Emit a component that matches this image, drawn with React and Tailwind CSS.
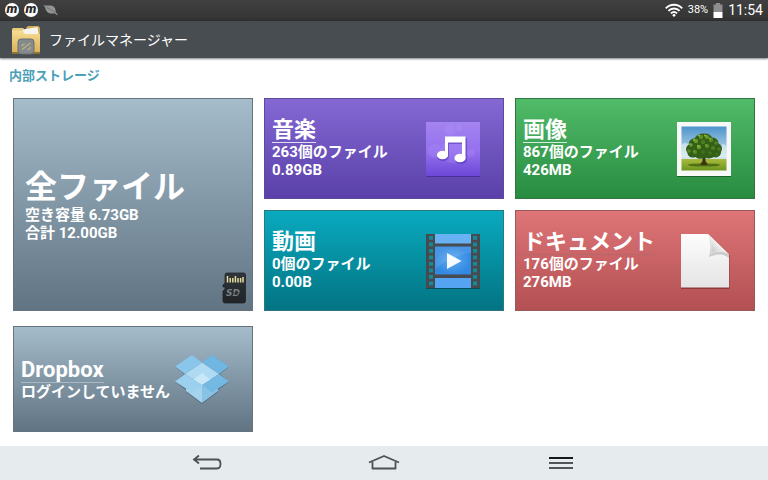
import clsx from "clsx";

// ----------------------------------
// STATUS BAR ICONS
// ----------------------------------
function AppBadge() {
  return (
    <span className="flex h-3.5 w-3.5 items-center justify-center rounded-full bg-white">
      <span className="text-[13px] leading-[10px] pb-0.5 font-black italic text-[#2a2a2a]">
        m
      </span>
    </span>
  );
}

function LeafIcon() {
  return (
    <svg width="16" height="14" viewBox="0 0 16 14" aria-hidden="true">
      <path
        d="M0.5 2C4 3.4 6.5 1.800 9.500 3C12.500 4.400 12.600 7.200 12.700 9L15.200 12.200C13.600 12 12.600 11.200 11.800 10.200C8.600 11 5.200 10.600 3.600 8.200C2.300 6.200 2.200 4 0.5 2Z"
        fill="#949494"
      />
      <path
        d="M3.500 4.600C6.800 5.600 9.600 7.400 11.800 9.600"
        stroke="#636363"
        strokeWidth="0.7"
        fill="none"
      />
    </svg>
  );
}

function WifiIcon() {
  return (
    <svg width="18" height="14" viewBox="0 0 18 14" aria-hidden="true">
      <g fill="none" stroke="#fff" strokeWidth="1.9">
        <path d="M0.8 5.3C5.4 0.5 12.6 0.5 17.2 5.3" />
        <path d="M3.4 7.9C6.6 4.7 11.4 4.7 14.6 7.9" />
        <path d="M5.9 10.4C7.7 8.7 10.3 8.7 12.1 10.4" />
      </g>
      <circle cx="9" cy="12.3" r="1.4" fill="#fff" />
    </svg>
  );
}

function BatteryIcon() {
  return (
    <svg width="10" height="15" viewBox="0 0 10 15" aria-hidden="true">
      <path d="M3 0H7V1.5H9.5V9H0.5V1.5H3Z" fill="#8d8d8d" />
      <rect x="0.5" y="9" width="9" height="6" fill="#fff" />
    </svg>
  );
}

// ----------------------------------
// TITLE BAR ICON
// ----------------------------------
function FolderIcon() {
  return (
    <svg width="30" height="30" viewBox="0 0 30 30" aria-hidden="true">
      <defs>
        <linearGradient id="folder" x1="0" y1="0" x2="0" y2="1">
          <stop offset="0" stopColor="#f7dd94" />
          <stop offset="1" stopColor="#d9b056" />
        </linearGradient>
      </defs>
      <path d="M15 3L17 1H27.5L29 3V26H15Z" fill="#d3aa55" />
      <path d="M1 4L2 3H12L14 5V9H1Z" fill="#e9c87c" />
      <path d="M12 4.5L26.5 2L28 12H12Z" fill="#f4f5f0" />
      <path d="M1 5.5H11L14 9H29V28H1Z" fill="url(#folder)" />
      <path d="M1 27H29V29H1Z" fill="#8d7238" />
      <rect
        x="7"
        y="14"
        width="16"
        height="15"
        rx="3"
        fill="#858b8c"
        stroke="#686e70"
      />
      <path
        d="M11 24.500L19.500 18M16.500 25L20 22.300M10.500 21L13.500 18.800"
        stroke="#bdb084"
        strokeWidth="1.4"
      />
    </svg>
  );
}

// ----------------------------------
// TILE ICONS
// ----------------------------------
function SdCardIcon() {
  return (
    <svg width="24" height="32" viewBox="0 0 24 32" aria-hidden="true">
      <defs>
        <linearGradient id="sd" x1="0" y1="0" x2="0" y2="1">
          <stop offset="0" stopColor="#30363b" />
          <stop offset="1" stopColor="#202427" />
        </linearGradient>
      </defs>
      <path
        d="M5 1H21.5Q23.5 1 23.5 3V29Q23.5 31 21.5 31H3Q1 31 1 29V19L3 17V15H1V13L3 11V3Q3 1 5 1Z"
        fill="url(#sd)"
        stroke="#1c2023"
        strokeWidth="0.7"
      />
      <path
        d="M5.500 4V10.500M8.200 6V10.500M10.800 6V10.500M13.400 4V10.500M16 6V10.500M18.600 6V10.500M21 5V10.500"
        stroke="#e3dc9c"
        strokeWidth="1.5"
      />
      <text
        x="4"
        y="24"
        fontFamily="'DejaVu Sans', sans-serif"
        fontSize="9"
        fontWeight="700"
        fontStyle="italic"
        fill="#7b8184"
      >
        SD
      </text>
      <path d="M10 20.800H21M10 22.200H19" stroke="#24292c" strokeWidth="0.6" />
    </svg>
  );
}

function MusicIcon() {
  return (
    <svg width="54" height="56" viewBox="0 0 54 56" aria-hidden="true">
      <defs>
        <linearGradient id="music" x1="0" y1="0" x2="0" y2="1">
          <stop offset="0" stopColor="#a384f0" />
          <stop offset="0.55" stopColor="#9470ee" />
          <stop offset="1" stopColor="#6c48d8" />
        </linearGradient>
      </defs>
      <rect y="2" width="54" height="54" fill="#3a2580" opacity="0.6" />
      <rect y="1" width="54" height="54" fill="url(#music)" />
      <g fill="#c0a4ff" opacity="0.18">
        <circle cx="9" cy="30" r="7" />
        <circle cx="24" cy="9" r="5" />
        <circle cx="45" cy="32" r="4" />
        <circle cx="33" cy="7" r="3" />
        <circle cx="27" cy="30" r="12" />
      </g>
      <g fill="#4a2fa8" opacity="0.5">
        <path d="M20 17H41V38H37V23H23V36H20Z" />
        <ellipse cx="17" cy="35.500" rx="6" ry="4.5" />
        <ellipse cx="35" cy="38.500" rx="6" ry="4.5" />
      </g>
      <g fill="#fff">
        <path d="M19 15.500H39.500V37H36V21.500H22V34H19Z" />
        <ellipse cx="16.500" cy="34" rx="5.600" ry="4.300" />
        <ellipse cx="34" cy="37" rx="5.600" ry="4.300" />
      </g>
    </svg>
  );
}

// leaf clusters of the tree crown: [cx, cy, r, colour]
const LEAVES = [
  [24, 16, 2.2, "#5f8f27"],
  [30, 16, 2, "#6c9c2c"],
  [19, 20, 2.2, "#6a9a2a"],
  [26, 21, 2.2, "#4c7d1f"],
  [34, 19, 2.2, "#5c8d26"],
  [39, 22, 1.8, "#55861f"],
  [14, 24, 1.8, "#6a9a2a"],
  [22, 26, 2.2, "#6c9c2c"],
  [30, 25, 2, "#5f8f27"],
  [36, 27, 2, "#4f8120"],
  [42, 28, 1.8, "#4c7d1f"],
  [12, 30, 1.8, "#568823"],
  [18, 31, 2, "#5a8b24"],
  [26, 31, 1.8, "#447319"],
  [33, 32, 1.8, "#447319"],
  [40, 33, 1.6, "#416f18"],
  [22, 14.5, 0.9, "#9cc552"],
  [28, 14.5, 0.9, "#9cc552"],
  [17, 19, 0.9, "#97c04c"],
  [33, 17.5, 0.9, "#8db845"],
  [21, 25, 0.9, "#97c04c"],
  [29, 24, 0.8, "#86b13f"],
  [13, 23, 0.8, "#8db845"],
  [17, 30, 0.8, "#7ba838"],
];

function PhotoIcon() {
  return (
    <svg width="54" height="56" viewBox="0 0 54 56" aria-hidden="true">
      <defs>
        <linearGradient id="sky" x1="0" y1="0" x2="0" y2="1">
          <stop offset="0" stopColor="#4d94cc" />
          <stop offset="1" stopColor="#d5e9ee" />
        </linearGradient>
        <linearGradient id="grass" x1="0" y1="0" x2="0" y2="1">
          <stop offset="0" stopColor="#a9bb3c" />
          <stop offset="1" stopColor="#6d961f" />
        </linearGradient>
      </defs>
      <rect y="2" width="54" height="54" fill="#134d22" opacity="0.7" />
      <rect y="1" width="54" height="54" fill="#f7f8f7" />
      <rect x="4.5" y="5.5" width="45" height="33" fill="url(#sky)" />
      <path
        d="M4.5 24Q8 20 12 24H44Q47 22 49.5 25V36H4.5Z"
        fill="#eaf3f2"
        opacity="0.6"
      />
      <rect x="4.5" y="38" width="45" height="11.5" fill="url(#grass)" />
      <ellipse cx="27" cy="44" rx="16" ry="1.6" fill="#4d7214" />
      <path d="M25.5 32H28.500L28.500 40L31 44H23L25.500 40Z" fill="#3f3212" />
      <path
        d="M27 12.500C31 12 34 14 35 16.500C39 16.500 41.500 19 41.500 22.500C45 24 46 28 44 31C44 35 40 37.500 36.500 36C33.500 38 30.500 37.500 27.500 36.500C24 38.500 20.500 38 18.500 36C14.500 37.500 10.500 35.500 10.500 32C8 29 9 25 12 23.500C11.500 20 14 17.500 17.500 17.500C19 14.500 22.500 12.500 27 12.500Z"
        fill="#345f17"
      />
      {LEAVES.map(([cx, cy, r, fill]) => (
        <circle key={`${cx}-${cy}`} cx={cx} cy={cy} r={r} fill={fill} />
      ))}
    </svg>
  );
}

const FILM_HOLES = [3, 9.5, 16, 22.5, 29, 35.5, 42, 48.5];

function VideoIcon() {
  return (
    <svg width="54" height="56" viewBox="0 0 54 56" aria-hidden="true">
      <defs>
        <radialGradient id="film">
          <stop offset="0" stopColor="#5cabf3" />
          <stop offset="1" stopColor="#3389e2" />
        </radialGradient>
      </defs>
      <rect y="2" width="54" height="54" fill="#083c44" opacity="0.7" />
      <rect y="1" width="54" height="54" fill="#474b4f" />
      <rect x="9" y="1" width="36" height="9.5" fill="#68b1f3" />
      <rect x="9" y="13.5" width="36" height="28" fill="url(#film)" />
      <rect x="9" y="45" width="36" height="10" fill="#55a4f1" />
      <path d="M9 13.5H45V20Q27 22 9 36Z" fill="#fff" opacity="0.1" />
      {FILM_HOLES.map((y) => (
        <g key={y} fill="#138b98">
          <rect x="3" y={y} width="4" height="3.8" />
          <rect x="47" y={y} width="4" height="3.8" />
        </g>
      ))}
      <path d="M21 20L35.5 28L21 36Z" fill="#f7fbff" />
    </svg>
  );
}

function DocumentIcon() {
  return (
    <svg width="54" height="56" viewBox="0 0 54 56" aria-hidden="true">
      <defs>
        <linearGradient id="paper" x1="0" y1="0" x2="0" y2="1">
          <stop offset="0" stopColor="#fdfdfd" />
          <stop offset="1" stopColor="#e4e4e4" />
        </linearGradient>
        <linearGradient id="fold" x1="1" y1="0" x2="0" y2="1">
          <stop offset="0.4" stopColor="#ffffff" />
          <stop offset="1" stopColor="#b4b4b4" />
        </linearGradient>
      </defs>
      <path d="M4 3H31L52.5 22V56H4Z" fill="#6b2326" opacity="0.55" />
      <path d="M4 1H31L52 21.500V54.500H4Z" fill="url(#paper)" />
      <path
        d="M31 1C35 8 35.500 15 33.500 21C41 17.500 47 18 52 21.500V25C46 20.500 40 20.500 32 24C34.500 15 34 8 31 1Z"
        fill="#7d7d7d"
        opacity="0.35"
      />
      <path
        d="M31 1C35 7 35.500 14 34 20C41 17 47 18 52 21.500Z"
        fill="url(#fold)"
      />
    </svg>
  );
}

function DropboxIcon() {
  return (
    <svg width="54" height="50" viewBox="0 0 54 50" aria-hidden="true">
      <path
        d="M17 2L27 9.500L38 2L54 13L45 20L54 28L43 36V38L27 50L11 38V36L0 28L9 20L0 13Z"
        fill="#34495a"
        opacity="0.5"
      />
      <path d="M11 21L27 31V49L11 37Z" fill="#a4d3ee" />
      <path d="M27 31L43 21V37L27 49Z" fill="#88c2e5" />
      <path d="M17 1L27 8.500L10 20L0 12.500Z" fill="#8ac5ea" />
      <path d="M37 1L54 12.500L44 20L27 8.500Z" fill="#6fb6e1" />
      <path d="M27 8.500L44 20L27 31L10 20Z" fill="#aedaf3" />
      <path d="M27 19L35.500 25.500L27 31L18.500 25.500Z" fill="#c8e8f8" />
      <path d="M10 20L27 31L17 38.500L0 27.500Z" fill="#9bd0ef" />
      <path d="M44 20L54 27.500L37 38.500L27 31Z" fill="#74b9e3" />
    </svg>
  );
}

// ----------------------------------
// NAVIGATION ICONS
// ----------------------------------
function BackIcon() {
  return (
    <svg width="30" height="18" viewBox="0 0 30 18" aria-hidden="true">
      <path
        d="M7 1.500L2 5.500L7 9.500M2 5.500H25Q28.500 5.500 28.500 10Q28.500 14.500 25 14.500H8"
        fill="none"
        stroke="#4b5154"
        strokeWidth="1.8"
      />
    </svg>
  );
}

function HomeIcon() {
  return (
    <svg width="32" height="18" viewBox="0 0 32 18" aria-hidden="true">
      <path
        d="M1 8.500L16 2L31 8.500M4.500 8V14.500H27.500V8"
        fill="none"
        stroke="#4b5154"
        strokeWidth="1.8"
        strokeLinejoin="round"
      />
    </svg>
  );
}

function MenuIcon() {
  return (
    <svg width="24" height="18" viewBox="0 0 24 18" aria-hidden="true">
      <path d="M0 4H24" stroke="#15191b" strokeWidth="2" />
      <path d="M0 9H24M0 14H24" stroke="#4f5558" strokeWidth="2" />
    </svg>
  );
}

const CATEGORIES = [
  {
    title: "音楽",
    lines: ["263個のファイル", "0.89GB"],
    icon: MusicIcon,
    color: "from-[#8468d4] to-[#5a40a8] border-[#5d4a9c]",
    underline: "border-white/80",
  },
  {
    title: "画像",
    lines: ["867個のファイル", "426MB"],
    icon: PhotoIcon,
    color: "from-[#50bb69] to-[#288c40] border-[#35733f]",
    underline: "border-white/80",
  },
  {
    title: "動画",
    lines: ["0個のファイル", "0.00B"],
    icon: VideoIcon,
    color: "from-[#0aaabf] to-[#037483] border-[#2b7782]",
    underline: "border-transparent",
  },
  {
    title: "ドキュメント",
    lines: ["176個のファイル", "276MB"],
    icon: DocumentIcon,
    color: "from-[#de7577] to-[#b35053] border-[#99585a]",
    underline: "border-[#b4686a]",
  },
];

function Tile({ title, lines, icon: Icon, color, underline }) {
  return (
    <button
      type="button"
      className={clsx(
        "flex items-center justify-between border bg-linear-to-b pl-[7px] pr-[23px] text-left text-white",
        color
      )}
    >
      <span className="flex flex-col items-start whitespace-nowrap font-bold">
        <span
          className={clsx("border-b text-[22px] leading-6", underline)}
        >
          {title}
        </span>
        {lines.map((line) => (
          <span key={line} className="text-[15px] leading-[18px]">
            {line}
          </span>
        ))}
      </span>
      <span className="-ml-12 shrink-0">
        <Icon />
      </span>
    </button>
  );
}

export default function App() {
  return (
    <div className="flex min-h-screen flex-col bg-white font-['Roboto','Noto_Sans_CJK_JP',sans-serif]">
      {/* STATUS BAR */}
      <div className="flex h-5 items-center justify-between bg-linear-to-b from-[#404040] to-[#343434] px-[5px] text-white">
        <div className="flex items-center gap-[5px]">
          <AppBadge />
          <AppBadge />
          <LeafIcon />
        </div>
        <div className="flex items-center gap-[5px]">
          <WifiIcon />
          <span className="text-[11px] leading-5">38%</span>
          <BatteryIcon />
          <span className="text-sm leading-5">11:54</span>
        </div>
      </div>

      {/* TITLE BAR */}
      <header className="flex h-[38px] items-center gap-2 border-t border-[#2c2e30] bg-[#484d51] px-[11px] text-white shadow-[0_1px_2px_rgba(0,0,0,0.5)]">
        <FolderIcon />
        <h1 className="text-sm leading-5">ファイルマネージャー</h1>
      </header>

      <main className="px-[13px] pt-2 pb-3">
        <h2 className="-ml-1 mb-3 text-[13px] leading-5 font-bold text-[#4aa0b8]">
          内部ストレージ
        </h2>

        <div className="grid grid-cols-3 grid-rows-[101px_101px] gap-[11px]">
          {/* ALL FILES */}
          <button
            type="button"
            className="relative row-span-2 flex flex-col items-start justify-center border border-[#66747f] bg-linear-to-b from-[#a5bccb] to-[#617483] pl-[11px] text-left font-bold text-white"
          >
            <span className="text-[32px] leading-[38px]">全ファイル</span>
            <span className="text-[15px] leading-[18px]">
              空き容量 6.73GB
            </span>
            <span className="text-[15px] leading-[18px]">合計 12.00GB</span>
            <span className="absolute right-1.5 bottom-1.5">
              <SdCardIcon />
            </span>
          </button>

          {CATEGORIES.map((category) => (
            <Tile key={category.title} {...category} />
          ))}
        </div>

        {/* CLOUD */}
        <div className="mt-[15px] grid auto-rows-[106px] grid-cols-3 gap-[11px]">
          <Tile
            title="Dropbox"
            lines={["ログインしていません"]}
            icon={DropboxIcon}
            color="from-[#a5bccb] to-[#617483] border-[#66747f]"
            underline="border-[#a9b8c2]"
          />
        </div>
      </main>

      {/* NAVIGATION BAR */}
      <nav className="mt-auto bg-[#e6ebed]">
        <div className="mx-auto grid h-[34px] w-full max-w-[531px] grid-cols-3">
          <button
            type="button"
            aria-label="戻る"
            className="flex items-center justify-center"
          >
            <BackIcon />
          </button>
          <button
            type="button"
            aria-label="ホーム"
            className="flex items-center justify-center"
          >
            <HomeIcon />
          </button>
          <button
            type="button"
            aria-label="メニュー"
            className="flex items-center justify-center"
          >
            <MenuIcon />
          </button>
        </div>
      </nav>
    </div>
  );
}
